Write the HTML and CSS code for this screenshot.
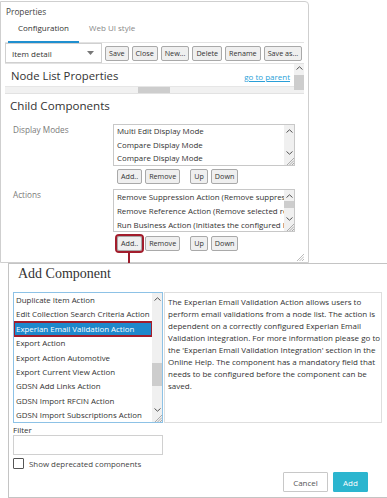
FILE: index.html
```html
<!DOCTYPE html>
<html lang="en">
<head>
    <meta charset="UTF-8">
    <meta name="viewport" content="width=device-width, initial-scale=1.0">
    <title>Add Component</title>
    <link rel="stylesheet" href="styles.css">
</head>
<body>
    <div class="panel">
        <div class="panel-title">Properties</div>
        <div class="tabs">
            <span class="tab active">Configuration</span>
            <span class="tab">Web UI style</span>
        </div>
        <div class="toolbar">
            <div class="select">
                <span>Item detail</span>
                <svg class="caret" width="7" height="4" viewBox="0 0 7 4"><polygon points="0,0 7,0 3.5,4" fill="#777"/></svg>
            </div>
            <button class="btn">Save</button>
            <button class="btn">Close</button>
            <button class="btn">New...</button>
            <button class="btn">Delete</button>
            <button class="btn">Rename</button>
            <button class="btn">Save as...</button>
        </div>
        <div class="pane">
            <div class="pane-main">
                <div class="pane-head">
                    <span class="node-title">Node List Properties</span>
                    <a class="parent-link" href="#">go to parent</a>
                </div>
                <div class="hscroll"><div class="hthumb"></div></div>
            </div>
            <div class="vscroll">
                <svg class="arr" width="7" height="4" viewBox="0 0 7 4"><polyline points="0.5,3.5 3.5,0.8 6.5,3.5" fill="none" stroke="#555" stroke-width="1"/></svg>
                <div class="vthumb"></div>
            </div>
        </div>

        <div class="child">
            <h2>Child Components</h2>
            <div class="field">
                <div class="label">Display Modes</div>
                <div class="field-body">
                    <div class="listbox">
                        <div class="items">
                            <div class="item">Multi Edit Display Mode</div>
                            <div class="item">Compare Display Mode</div>
                            <div class="item">Compare Display Mode</div>
                        </div>
                        <div class="sb">
                            <svg class="arr" width="7" height="4" viewBox="0 0 7 4"><polyline points="0.5,3.5 3.5,0.8 6.5,3.5" fill="none" stroke="#555" stroke-width="1"/></svg>
                            <div class="sb-fill"></div>
                            <svg class="arr" width="7" height="4" viewBox="0 0 7 4"><polyline points="0.5,0.5 3.5,3.2 6.5,0.5" fill="none" stroke="#555" stroke-width="1"/></svg>
                            <svg class="grip" width="8" height="8" viewBox="0 0 8 8"><path d="M8 1 L1 8 M8 3.5 L3.5 8 M8 6 L6 8" stroke="#999" stroke-width="0.8"/></svg>
                        </div>
                    </div>
                    <div class="btn-row">
                        <button class="btn">Add..</button>
                        <button class="btn">Remove</button>
                        <button class="btn btn-up">Up</button>
                        <button class="btn">Down</button>
                    </div>
                </div>
            </div>
            <div class="field field-actions">
                <div class="label">Actions</div>
                <div class="field-body">
                    <div class="listbox listbox-actions">
                        <div class="items">
                            <div class="item">Remove Suppression Action (Remove suppres</div>
                            <div class="item">Remove Reference Action (Remove selected re</div>
                            <div class="item">Run Business Action (Initiates the configured I</div>
                        </div>
                        <div class="sb">
                            <svg class="arr" width="7" height="4" viewBox="0 0 7 4"><polyline points="0.5,3.5 3.5,0.8 6.5,3.5" fill="none" stroke="#555" stroke-width="1"/></svg>
                            <div class="sb-thumb thumb-actions"></div>
                            <div class="sb-fill"></div>
                            <svg class="arr" width="7" height="4" viewBox="0 0 7 4"><polyline points="0.5,0.5 3.5,3.2 6.5,0.5" fill="none" stroke="#555" stroke-width="1"/></svg>
                            <svg class="grip" width="8" height="8" viewBox="0 0 8 8"><path d="M8 1 L1 8 M8 3.5 L3.5 8 M8 6 L6 8" stroke="#999" stroke-width="0.8"/></svg>
                        </div>
                    </div>
                    <div class="btn-row">
                        <button class="btn btn-marked">Add..</button>
                        <button class="btn">Remove</button>
                        <button class="btn btn-up">Up</button>
                        <button class="btn">Down</button>
                    </div>
                </div>
            </div>
        </div>
        <svg class="panel-grip" width="8" height="8" viewBox="0 0 8 8"><path d="M8 1 L1 8 M8 3.5 L3.5 8 M8 6 L6 8" stroke="#aaa" stroke-width="0.8"/></svg>
    </div>

    <svg class="pointer" width="10" height="37" viewBox="0 0 10 37">
        <line x1="5" y1="0" x2="5" y2="29" stroke="#9b1b2b" stroke-width="2"/>
        <polygon points="1,27 9,27 5,36" fill="#9b1b2b"/>
    </svg>

    <div class="dialog">
        <div class="dialog-title">Add Component</div>
        <div class="picker">
            <div class="listbox listbox-components">
                <div class="items">
                    <div class="item">Duplicate Item Action</div>
                    <div class="item">Edit Collection Search Criteria Action</div>
                    <div class="item selected">Experian Email Validation Action</div>
                    <div class="item">Export Action</div>
                    <div class="item">Export Action Automotive</div>
                    <div class="item">Export Current View Action</div>
                    <div class="item">GDSN Add Links Action</div>
                    <div class="item">GDSN Import RFCIN Action</div>
                    <div class="item">GDSN Import Subscriptions Action</div>
                </div>
                <div class="sb">
                    <svg class="arr" width="7" height="4" viewBox="0 0 7 4"><polyline points="0.5,3.5 3.5,0.8 6.5,3.5" fill="none" stroke="#555" stroke-width="1"/></svg>
                    <div class="sb-thumb thumb-components"></div>
                    <div class="sb-fill"></div>
                    <svg class="arr" width="7" height="4" viewBox="0 0 7 4"><polyline points="0.5,0.5 3.5,3.2 6.5,0.5" fill="none" stroke="#555" stroke-width="1"/></svg>
                    <svg class="grip" width="8" height="8" viewBox="0 0 8 8"><path d="M8 1 L1 8 M8 3.5 L3.5 8 M8 6 L6 8" stroke="#999" stroke-width="0.8"/></svg>
                </div>
            </div>
            <div class="description">
                The Experian Email Validation Action allows users to perform email validations from a node list. The action is dependent on a correctly configured Experian Email Validation integration. For more information please go to the 'Experian Email Validation Integration' section in the Online Help. The component has a mandatory field that needs to be configured before the component can be saved.
            </div>
        </div>
        <div class="filter-label">Filter</div>
        <input class="filter-input" type="text">
        <label class="check-row">
            <span class="checkbox"></span>
            <span>Show deprecated components</span>
        </label>
        <div class="dialog-actions">
            <button class="btn-cancel">Cancel</button>
            <button class="btn-add">Add</button>
        </div>
    </div>
</body>
</html>
```

FILE: styles.css
```css
* {
    box-sizing: border-box;
}
body {
    margin: 0;
    font-family: "Open Sans", "Noto Sans", sans-serif;
    color: #333;
    background-color: #fff;
    width: 387px;
    height: 498px;
    overflow: hidden;
    position: relative;
}
button {
    font-family: inherit;
    white-space: nowrap;
}

/* properties panel */
.panel {
    position: relative;
    width: 309px;
    height: 262px;
    margin-top: 1px;
    border: 1px solid #cfcfcf;
    border-radius: 0 4px 0 0;
}
.panel-title {
    padding: 5px 0 0 5px;
    font-size: 8.3px;
    line-height: 10px;
    color: #444;
}
.tabs {
    display: flex;
    height: 26px;
    margin: 0 4px;
    padding-left: 3px;
    border-bottom: 1px solid #e2e2e2;
}
.tab {
    padding: 0 10px;
    height: 26px;
    line-height: 22px;
    font-size: 8px;
    color: #888;
}
.tab.active {
    color: #333;
    border-bottom: 2px solid #1f8fcf;
}
.toolbar {
    display: flex;
    align-items: center;
    height: 20px;
    margin-left: 4px;
}
.select {
    display: flex;
    align-items: center;
    justify-content: space-between;
    width: 97px;
    height: 20px;
    padding: 0 7px 0 6px;
    border: 1px solid #d0d0d0;
    font-size: 8px;
}
.btn {
    height: 15px;
    margin-left: 3px;
    padding: 0 3px;
    border: 1px solid #a9a9a9;
    border-radius: 2px;
    background-color: #efefef;
    color: #333;
    font-size: 7.2px;
    line-height: 13px;
}
.pane {
    display: flex;
    height: 31px;
    margin: 0 4px;
    border-top: 1px solid #e2e2e2;
    border-bottom: 1px solid #e2e2e2;
}
.pane-main {
    flex: 1;
    display: flex;
    flex-direction: column;
}
.pane-head {
    flex: 1;
    display: flex;
    align-items: center;
    justify-content: space-between;
    padding: 0 4px 0 6px;
}
.node-title {
    font-size: 11.3px;
    color: #333;
}
.parent-link {
    font-size: 8px;
    color: #2a9fd8;
    margin-top: 2px;
}
.hscroll {
    height: 7px;
    background-color: #f1f1f1;
    border-top: 1px solid #e6e6e6;
    padding-left: 133px;
}
.hthumb {
    width: 32px;
    height: 6px;
    background-color: #cdcdcd;
}
.vscroll {
    width: 10px;
    background-color: #f1f1f1;
    display: flex;
    flex-direction: column;
    align-items: center;
    padding-top: 2px;
}
.vthumb {
    width: 10px;
    height: 15px;
    margin-top: 5px;
    background-color: #cdcdcd;
}

/* child components */
.child {
    padding-left: 9px;
}
.child h2 {
    margin: 4px 0 10px;
    font-size: 11.6px;
    font-weight: normal;
    line-height: 16px;
}
.field {
    display: flex;
}
.field-actions {
    margin-top: 5px;
}
.label {
    width: 103px;
    padding-left: 3px;
    font-size: 8.2px;
    line-height: 12px;
    color: #7a7a7a;
}
.listbox {
    display: flex;
    width: 182px;
    height: 42px;
    border: 1px solid #c8c8c8;
    background-color: #fff;
}
.listbox-actions {
    height: 43px;
}
.items {
    flex: 1;
    overflow: hidden;
}
.item {
    padding-left: 3px;
    font-size: 7.9px;
    line-height: 13.5px;
    white-space: nowrap;
    color: #333;
}
.listbox-actions .item {
    line-height: 14px;
}
.sb {
    width: 10px;
    display: flex;
    flex-direction: column;
    align-items: center;
    background-color: #f0f0f0;
    padding-top: 4px;
}
.sb-fill {
    flex: 1;
}
.sb .grip {
    align-self: flex-end;
    margin-top: 2px;
}
.sb-thumb {
    width: 10px;
    background-color: #cdcdcd;
}
.thumb-actions {
    height: 7px;
    margin-top: 3px;
}
.btn-row {
    display: flex;
    margin-top: 3px;
    padding-left: 1px;
}
.field-actions .btn-row {
    margin-top: 4px;
}
.btn-up {
    margin-left: 10px;
}
.btn-marked {
    outline: 2px solid #a21d2c;
}
.panel-grip {
    position: absolute;
    right: 4px;
    bottom: 1px;
}

/* pointer from the Add.. button to the dialog */
.pointer {
    position: absolute;
    left: 124px;
    top: 252px;
}

/* add component dialog */
.dialog {
    position: absolute;
    left: 8px;
    top: 263px;
    width: 390px;
    height: 235px;
    background-color: #fff;
    border: 1px solid #c4c4c4;
    padding-left: 4px;
}
.dialog-title {
    margin-top: 1px;
    padding-left: 5px;
    font-family: "Liberation Serif", serif;
    font-size: 14px;
    line-height: 18px;
    color: #333;
}
.picker {
    display: flex;
    margin-top: 9px;
}
.listbox-components {
    width: 150px;
    height: 131px;
    border-color: #8dc2e6;
}
.listbox-components .item {
    line-height: 14.4px;
    padding-left: 2px;
}
.item.selected {
    background-color: #1e88cc;
    color: #fff;
    outline: 2px solid #a21d2c;
    outline-offset: -1px;
}
.thumb-components {
    height: 23px;
    margin-top: 62px;
}
.description {
    width: 218px;
    height: 131px;
    margin-left: 1px;
    padding: 3px 0 3px 3px;
    border: 1px solid #dedede;
    font-size: 8px;
    line-height: 12px;
    color: #333;
}
.filter-label {
    margin-top: 1px;
    font-size: 8px;
    line-height: 11px;
}
.filter-input {
    display: block;
    width: 150px;
    height: 20px;
    border: 1px solid #d0d0d0;
    outline: none;
}
.check-row {
    display: flex;
    align-items: center;
    gap: 5px;
    margin-top: 3px;
    font-size: 7.9px;
    color: #444;
}
.checkbox {
    width: 11px;
    height: 11px;
    border: 1px solid #555;
    border-radius: 1px;
}
.dialog-actions {
    display: flex;
    justify-content: flex-end;
    gap: 5px;
    margin-top: 3px;
    padding-right: 29px;
}
.btn-cancel, .btn-add {
    height: 20px;
    font-size: 8px;
    border-radius: 1px;
}
.btn-cancel {
    width: 45px;
    background-color: #fff;
    border: 1px solid #c8c8c8;
    color: #555;
}
.btn-add {
    width: 35px;
    background-color: #2bb5cf;
    border: 1px solid #2bb5cf;
    color: #fff;
}
```
